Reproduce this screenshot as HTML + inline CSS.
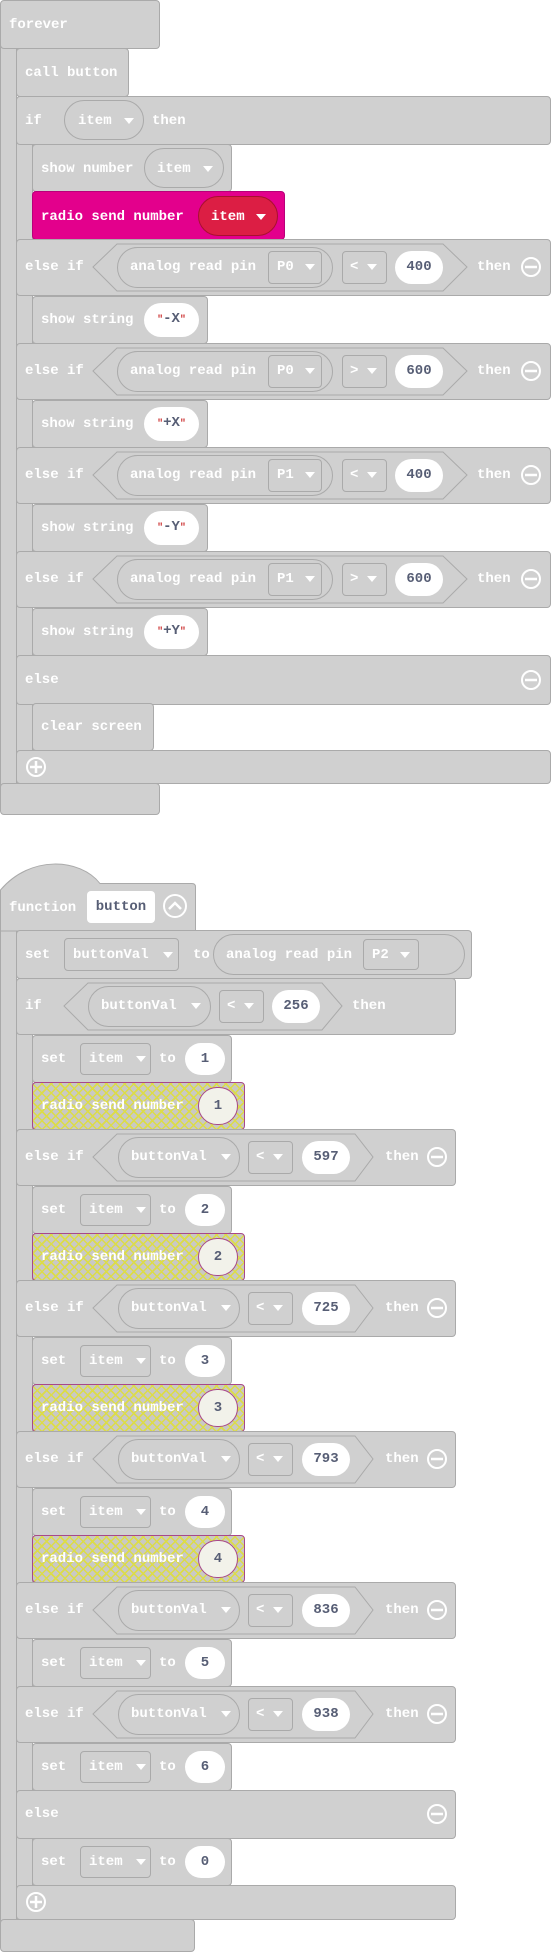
<!DOCTYPE html>
<html><head><meta charset="utf-8"><style>
body{margin:0;width:551px;height:1955px;background:#fff;position:relative;overflow:hidden;font:bold 14px "Liberation Mono",monospace}
.r{position:absolute;left:0;width:551px;height:0}
.r>*{position:absolute}
.b{background:#d0d0d0;border:1px solid #aaa;border-radius:4px;box-sizing:border-box}
.t{color:#fff;line-height:16px;white-space:pre}
.p{border:1px solid #aaa;border-radius:21px;box-sizing:border-box}
.d{border:1px solid #aaa;border-radius:4px;box-sizing:border-box}
.w{background:#fff;border-radius:17px;color:#575e75;text-align:center;line-height:33px;white-space:pre}
.tr{width:0;height:0;border-left:5px solid transparent;border-right:5px solid transparent;border-top:6px solid #fff}
.h{background-color:#c9c9c4;background-image:repeating-linear-gradient(45deg,transparent 0 5px,#dcdc48 5px 6.5px),repeating-linear-gradient(-45deg,transparent 0 5px,#dcdc48 5px 6.5px);border:1px solid #a8488a;border-radius:4px;box-sizing:border-box}
.c{background:#f2f2ea;border:1px solid #a8488a;border-radius:19px;box-sizing:border-box;color:#575e75;text-align:center;line-height:36px}
.q{color:#c33;font-size:10px}
svg{position:absolute}
</style></head><body>

<!-- FOREVER -->
<div class="r" style="top:0">
<div class="b" style="left:0;top:40px;width:17px;height:760px"></div>
<div class="b" style="left:0;top:0;width:160px;height:49px"></div>
<div class="t" style="left:9px;top:17px">forever</div>
<div class="b" style="left:16px;top:140px;width:17px;height:620px"></div>
</div>

<div class="r" style="top:48px">
<div class="b" style="left:16px;top:0;width:113px;height:49px"></div>
<div class="t" style="left:25px;top:17px">call button</div>
</div>

<div class="r" style="top:96px">
<div class="b" style="left:16px;top:0;width:535px;height:49px"></div>
<div class="t" style="left:25px;top:17px">if</div>
<div class="p" style="left:64px;top:4px;width:80px;height:40px"></div>
<div class="t" style="left:78px;top:17px">item</div><div class="tr" style="left:124px;top:22px"></div>
<div class="t" style="left:152px;top:17px">then</div>
</div>

<div class="r" style="top:144px">
<div class="b" style="left:32px;top:0;width:200px;height:48px"></div>
<div class="t" style="left:41px;top:17px">show number</div>
<div class="p" style="left:144px;top:4px;width:80px;height:40px"></div>
<div class="t" style="left:157px;top:17px">item</div><div class="tr" style="left:203px;top:22px"></div>
</div>

<div class="r" style="top:191px">
<div style="left:32px;top:0;width:253px;height:49px;background:#e3008c;border:1px solid #b8007a;border-radius:4px;box-sizing:border-box"></div>
<div class="t" style="left:41px;top:18px">radio send number</div>
<div style="left:198px;top:5px;width:80px;height:40px;background:#dc1e44;border:1px solid #a8102e;border-radius:20px;box-sizing:border-box"></div>
<div class="t" style="left:211px;top:18px">item</div><div class="tr" style="left:256px;top:23px"></div>
</div>

<!-- else if rows forever -->
<div class="r" style="top:239px">
<div class="b" style="left:16px;top:0;width:535px;height:57px"></div>
<svg style="left:0;top:0" width="551" height="57"><polygon points="93,28 117,5 443,5 467,28 443,52 117,52" fill="#d0d0d0" stroke="#aaa"/><circle cx="531" cy="28" r="9" fill="none" stroke="#fff" stroke-width="2"/><line x1="525" y1="28" x2="537" y2="28" stroke="#fff" stroke-width="2.5"/></svg>
<div class="t" style="left:25px;top:20px">else if</div>
<div class="p" style="left:117px;top:8px;width:216px;height:41px"></div>
<div class="t" style="left:130px;top:20px">analog read pin</div>
<div class="d" style="left:268px;top:12px;width:54px;height:33px"></div><div class="t" style="left:277px;top:20px">P0</div><div class="tr" style="left:305px;top:25px"></div>
<div class="d" style="left:342px;top:12px;width:45px;height:33px"></div><div class="t" style="left:350px;top:20px">&lt;</div><div class="tr" style="left:367px;top:25px"></div>
<div class="w" style="left:395px;top:12px;width:48px;height:33px">400</div>
<div class="t" style="left:477px;top:20px">then</div>
</div>
<div class="r" style="top:296px">
<div class="b" style="left:32px;top:0;width:176px;height:48px"></div>
<div class="t" style="left:41px;top:16px">show string</div>
<div class="w" style="left:144px;top:7px;width:55px;height:34px"><span class="q">"</span>-X<span class="q">"</span></div>
</div>

<div class="r" style="top:343px">
<div class="b" style="left:16px;top:0;width:535px;height:57px"></div>
<svg style="left:0;top:0" width="551" height="57"><polygon points="93,28 117,5 443,5 467,28 443,52 117,52" fill="#d0d0d0" stroke="#aaa"/><circle cx="531" cy="28" r="9" fill="none" stroke="#fff" stroke-width="2"/><line x1="525" y1="28" x2="537" y2="28" stroke="#fff" stroke-width="2.5"/></svg>
<div class="t" style="left:25px;top:20px">else if</div>
<div class="p" style="left:117px;top:8px;width:216px;height:41px"></div>
<div class="t" style="left:130px;top:20px">analog read pin</div>
<div class="d" style="left:268px;top:12px;width:54px;height:33px"></div><div class="t" style="left:277px;top:20px">P0</div><div class="tr" style="left:305px;top:25px"></div>
<div class="d" style="left:342px;top:12px;width:45px;height:33px"></div><div class="t" style="left:350px;top:20px">&gt;</div><div class="tr" style="left:367px;top:25px"></div>
<div class="w" style="left:395px;top:12px;width:48px;height:33px">600</div>
<div class="t" style="left:477px;top:20px">then</div>
</div>
<div class="r" style="top:400px">
<div class="b" style="left:32px;top:0;width:176px;height:48px"></div>
<div class="t" style="left:41px;top:16px">show string</div>
<div class="w" style="left:144px;top:7px;width:55px;height:34px"><span class="q">"</span>+X<span class="q">"</span></div>
</div>

<div class="r" style="top:447px">
<div class="b" style="left:16px;top:0;width:535px;height:57px"></div>
<svg style="left:0;top:0" width="551" height="57"><polygon points="93,28 117,5 443,5 467,28 443,52 117,52" fill="#d0d0d0" stroke="#aaa"/><circle cx="531" cy="28" r="9" fill="none" stroke="#fff" stroke-width="2"/><line x1="525" y1="28" x2="537" y2="28" stroke="#fff" stroke-width="2.5"/></svg>
<div class="t" style="left:25px;top:20px">else if</div>
<div class="p" style="left:117px;top:8px;width:216px;height:41px"></div>
<div class="t" style="left:130px;top:20px">analog read pin</div>
<div class="d" style="left:268px;top:12px;width:54px;height:33px"></div><div class="t" style="left:277px;top:20px">P1</div><div class="tr" style="left:305px;top:25px"></div>
<div class="d" style="left:342px;top:12px;width:45px;height:33px"></div><div class="t" style="left:350px;top:20px">&lt;</div><div class="tr" style="left:367px;top:25px"></div>
<div class="w" style="left:395px;top:12px;width:48px;height:33px">400</div>
<div class="t" style="left:477px;top:20px">then</div>
</div>
<div class="r" style="top:504px">
<div class="b" style="left:32px;top:0;width:176px;height:48px"></div>
<div class="t" style="left:41px;top:16px">show string</div>
<div class="w" style="left:144px;top:7px;width:55px;height:34px"><span class="q">"</span>-Y<span class="q">"</span></div>
</div>

<div class="r" style="top:551px">
<div class="b" style="left:16px;top:0;width:535px;height:57px"></div>
<svg style="left:0;top:0" width="551" height="57"><polygon points="93,28 117,5 443,5 467,28 443,52 117,52" fill="#d0d0d0" stroke="#aaa"/><circle cx="531" cy="28" r="9" fill="none" stroke="#fff" stroke-width="2"/><line x1="525" y1="28" x2="537" y2="28" stroke="#fff" stroke-width="2.5"/></svg>
<div class="t" style="left:25px;top:20px">else if</div>
<div class="p" style="left:117px;top:8px;width:216px;height:41px"></div>
<div class="t" style="left:130px;top:20px">analog read pin</div>
<div class="d" style="left:268px;top:12px;width:54px;height:33px"></div><div class="t" style="left:277px;top:20px">P1</div><div class="tr" style="left:305px;top:25px"></div>
<div class="d" style="left:342px;top:12px;width:45px;height:33px"></div><div class="t" style="left:350px;top:20px">&gt;</div><div class="tr" style="left:367px;top:25px"></div>
<div class="w" style="left:395px;top:12px;width:48px;height:33px">600</div>
<div class="t" style="left:477px;top:20px">then</div>
</div>
<div class="r" style="top:608px">
<div class="b" style="left:32px;top:0;width:176px;height:48px"></div>
<div class="t" style="left:41px;top:16px">show string</div>
<div class="w" style="left:144px;top:7px;width:55px;height:34px"><span class="q">"</span>+Y<span class="q">"</span></div>
</div>

<div class="r" style="top:655px">
<div class="b" style="left:16px;top:0;width:535px;height:50px"></div>
<div class="t" style="left:25px;top:17px">else</div>
<svg style="left:0;top:0" width="551" height="50"><circle cx="531" cy="25" r="9" fill="none" stroke="#fff" stroke-width="2"/><line x1="525" y1="25" x2="537" y2="25" stroke="#fff" stroke-width="2.5"/></svg>
</div>
<div class="r" style="top:703px">
<div class="b" style="left:32px;top:0;width:122px;height:48px"></div>
<div class="t" style="left:41px;top:16px">clear screen</div>
</div>
<div class="r" style="top:750px">
<div class="b" style="left:16px;top:0;width:535px;height:34px"></div>
<svg style="left:0;top:0" width="60" height="34"><circle cx="36" cy="17" r="9" fill="none" stroke="#fff" stroke-width="2"/><line x1="30" y1="17" x2="42" y2="17" stroke="#fff" stroke-width="2.5"/><line x1="36" y1="11" x2="36" y2="23" stroke="#fff" stroke-width="2.5"/></svg>
</div>
<div class="r" style="top:783px">
<div class="b" style="left:0;top:0;width:160px;height:32px"></div>
</div>

<!-- FUNCTION -->
<div class="r" style="top:860px">
<div class="b" style="left:0;top:60px;width:17px;height:1010px"></div>
<svg style="left:0;top:0" width="200" height="72"><path d="M0.5,71 L0.5,30 C30,-5 80,-2 100,23.5 L192,23.5 Q195.5,23.5 195.5,27 L195.5,71 Z" fill="#d0d0d0" stroke="#aaa"/><circle cx="175" cy="46" r="11" fill="none" stroke="#fff" stroke-width="2"/><polyline points="169,49 175,43 181,49" fill="none" stroke="#fff" stroke-width="2.5"/></svg>
<div class="t" style="left:9px;top:40px">function</div>
<div style="left:87px;top:31px;width:68px;height:32px;background:#fff;border-radius:4px;color:#575e75;line-height:32px;text-align:center">button</div>
</div>
<div class="r" style="top:978px">
<div class="b" style="left:16px;top:40px;width:17px;height:880px"></div>
</div>

<div class="r" style="top:930px">
<div class="b" style="left:16px;top:0;width:456px;height:49px"></div>
<div class="t" style="left:25px;top:17px">set</div>
<div class="d" style="left:64px;top:8px;width:115px;height:33px"></div><div class="t" style="left:73px;top:17px">buttonVal</div><div class="tr" style="left:163px;top:22px"></div>
<div class="t" style="left:193px;top:17px">to</div>
<div class="p" style="left:213px;top:4px;width:252px;height:41px"></div>
<div class="t" style="left:226px;top:17px">analog read pin</div>
<div class="d" style="left:363px;top:9px;width:56px;height:31px"></div><div class="t" style="left:372px;top:17px">P2</div><div class="tr" style="left:400px;top:22px"></div>
</div>

<div class="r" style="top:978px">
<div class="b" style="left:16px;top:0;width:440px;height:57px"></div>
<svg style="left:0;top:0" width="460" height="57"><polygon points="64,28 88,5 322,5 342,28 322,52 88,52" fill="#d0d0d0" stroke="#aaa"/></svg>
<div class="t" style="left:25px;top:20px">if</div>
<div class="p" style="left:88px;top:8px;width:123px;height:41px"></div><div class="t" style="left:101px;top:20px">buttonVal</div><div class="tr" style="left:191px;top:25px"></div>
<div class="d" style="left:219px;top:12px;width:45px;height:33px"></div><div class="t" style="left:227px;top:20px">&lt;</div><div class="tr" style="left:244px;top:25px"></div>
<div class="w" style="left:272px;top:12px;width:48px;height:33px">256</div>
<div class="t" style="left:352px;top:20px">then</div>
</div>

<!-- set/radio/elseif function rows -->
<div class="r" style="top:1035px">
<div class="b" style="left:32px;top:0;width:200px;height:48px"></div>
<div class="t" style="left:41px;top:16px">set</div>
<div class="d" style="left:80px;top:8px;width:71px;height:32px"></div><div class="t" style="left:89px;top:16px">item</div><div class="tr" style="left:136px;top:21px"></div>
<div class="t" style="left:159px;top:16px">to</div>
<div class="w" style="left:185px;top:8px;width:40px;height:32px;line-height:32px">1</div>
</div>
<div class="r" style="top:1082px">
<div class="h" style="left:32px;top:0;width:213px;height:48px"></div>
<div class="t" style="left:41px;top:16px">radio send number</div>
<div class="c" style="left:198px;top:5px;width:40px;height:38px">1</div>
</div>

<div class="r" style="top:1129px">
<div class="b" style="left:16px;top:0;width:440px;height:57px"></div>
<svg style="left:0;top:0" width="460" height="57"><polygon points="93,28 117,5 355,5 373,28 355,52 117,52" fill="#d0d0d0" stroke="#aaa"/><circle cx="437" cy="28" r="9" fill="none" stroke="#fff" stroke-width="2"/><line x1="431" y1="28" x2="443" y2="28" stroke="#fff" stroke-width="2.5"/></svg>
<div class="t" style="left:25px;top:20px">else if</div>
<div class="p" style="left:118px;top:8px;width:122px;height:41px"></div><div class="t" style="left:131px;top:20px">buttonVal</div><div class="tr" style="left:221px;top:25px"></div>
<div class="d" style="left:248px;top:12px;width:45px;height:33px"></div><div class="t" style="left:256px;top:20px">&lt;</div><div class="tr" style="left:273px;top:25px"></div>
<div class="w" style="left:302px;top:12px;width:48px;height:33px">597</div>
<div class="t" style="left:385px;top:20px">then</div>
</div>
<div class="r" style="top:1186px">
<div class="b" style="left:32px;top:0;width:200px;height:48px"></div>
<div class="t" style="left:41px;top:16px">set</div>
<div class="d" style="left:80px;top:8px;width:71px;height:32px"></div><div class="t" style="left:89px;top:16px">item</div><div class="tr" style="left:136px;top:21px"></div>
<div class="t" style="left:159px;top:16px">to</div>
<div class="w" style="left:185px;top:8px;width:40px;height:32px;line-height:32px">2</div>
</div>
<div class="r" style="top:1233px">
<div class="h" style="left:32px;top:0;width:213px;height:48px"></div>
<div class="t" style="left:41px;top:16px">radio send number</div>
<div class="c" style="left:198px;top:5px;width:40px;height:38px">2</div>
</div>

<div class="r" style="top:1280px">
<div class="b" style="left:16px;top:0;width:440px;height:57px"></div>
<svg style="left:0;top:0" width="460" height="57"><polygon points="93,28 117,5 355,5 373,28 355,52 117,52" fill="#d0d0d0" stroke="#aaa"/><circle cx="437" cy="28" r="9" fill="none" stroke="#fff" stroke-width="2"/><line x1="431" y1="28" x2="443" y2="28" stroke="#fff" stroke-width="2.5"/></svg>
<div class="t" style="left:25px;top:20px">else if</div>
<div class="p" style="left:118px;top:8px;width:122px;height:41px"></div><div class="t" style="left:131px;top:20px">buttonVal</div><div class="tr" style="left:221px;top:25px"></div>
<div class="d" style="left:248px;top:12px;width:45px;height:33px"></div><div class="t" style="left:256px;top:20px">&lt;</div><div class="tr" style="left:273px;top:25px"></div>
<div class="w" style="left:302px;top:12px;width:48px;height:33px">725</div>
<div class="t" style="left:385px;top:20px">then</div>
</div>
<div class="r" style="top:1337px">
<div class="b" style="left:32px;top:0;width:200px;height:48px"></div>
<div class="t" style="left:41px;top:16px">set</div>
<div class="d" style="left:80px;top:8px;width:71px;height:32px"></div><div class="t" style="left:89px;top:16px">item</div><div class="tr" style="left:136px;top:21px"></div>
<div class="t" style="left:159px;top:16px">to</div>
<div class="w" style="left:185px;top:8px;width:40px;height:32px;line-height:32px">3</div>
</div>
<div class="r" style="top:1384px">
<div class="h" style="left:32px;top:0;width:213px;height:48px"></div>
<div class="t" style="left:41px;top:16px">radio send number</div>
<div class="c" style="left:198px;top:5px;width:40px;height:38px">3</div>
</div>

<div class="r" style="top:1431px">
<div class="b" style="left:16px;top:0;width:440px;height:57px"></div>
<svg style="left:0;top:0" width="460" height="57"><polygon points="93,28 117,5 355,5 373,28 355,52 117,52" fill="#d0d0d0" stroke="#aaa"/><circle cx="437" cy="28" r="9" fill="none" stroke="#fff" stroke-width="2"/><line x1="431" y1="28" x2="443" y2="28" stroke="#fff" stroke-width="2.5"/></svg>
<div class="t" style="left:25px;top:20px">else if</div>
<div class="p" style="left:118px;top:8px;width:122px;height:41px"></div><div class="t" style="left:131px;top:20px">buttonVal</div><div class="tr" style="left:221px;top:25px"></div>
<div class="d" style="left:248px;top:12px;width:45px;height:33px"></div><div class="t" style="left:256px;top:20px">&lt;</div><div class="tr" style="left:273px;top:25px"></div>
<div class="w" style="left:302px;top:12px;width:48px;height:33px">793</div>
<div class="t" style="left:385px;top:20px">then</div>
</div>
<div class="r" style="top:1488px">
<div class="b" style="left:32px;top:0;width:200px;height:48px"></div>
<div class="t" style="left:41px;top:16px">set</div>
<div class="d" style="left:80px;top:8px;width:71px;height:32px"></div><div class="t" style="left:89px;top:16px">item</div><div class="tr" style="left:136px;top:21px"></div>
<div class="t" style="left:159px;top:16px">to</div>
<div class="w" style="left:185px;top:8px;width:40px;height:32px;line-height:32px">4</div>
</div>
<div class="r" style="top:1535px">
<div class="h" style="left:32px;top:0;width:213px;height:48px"></div>
<div class="t" style="left:41px;top:16px">radio send number</div>
<div class="c" style="left:198px;top:5px;width:40px;height:38px">4</div>
</div>

<div class="r" style="top:1582px">
<div class="b" style="left:16px;top:0;width:440px;height:57px"></div>
<svg style="left:0;top:0" width="460" height="57"><polygon points="93,28 117,5 355,5 373,28 355,52 117,52" fill="#d0d0d0" stroke="#aaa"/><circle cx="437" cy="28" r="9" fill="none" stroke="#fff" stroke-width="2"/><line x1="431" y1="28" x2="443" y2="28" stroke="#fff" stroke-width="2.5"/></svg>
<div class="t" style="left:25px;top:20px">else if</div>
<div class="p" style="left:118px;top:8px;width:122px;height:41px"></div><div class="t" style="left:131px;top:20px">buttonVal</div><div class="tr" style="left:221px;top:25px"></div>
<div class="d" style="left:248px;top:12px;width:45px;height:33px"></div><div class="t" style="left:256px;top:20px">&lt;</div><div class="tr" style="left:273px;top:25px"></div>
<div class="w" style="left:302px;top:12px;width:48px;height:33px">836</div>
<div class="t" style="left:385px;top:20px">then</div>
</div>
<div class="r" style="top:1639px">
<div class="b" style="left:32px;top:0;width:200px;height:48px"></div>
<div class="t" style="left:41px;top:16px">set</div>
<div class="d" style="left:80px;top:8px;width:71px;height:32px"></div><div class="t" style="left:89px;top:16px">item</div><div class="tr" style="left:136px;top:21px"></div>
<div class="t" style="left:159px;top:16px">to</div>
<div class="w" style="left:185px;top:8px;width:40px;height:32px;line-height:32px">5</div>
</div>

<div class="r" style="top:1686px">
<div class="b" style="left:16px;top:0;width:440px;height:57px"></div>
<svg style="left:0;top:0" width="460" height="57"><polygon points="93,28 117,5 355,5 373,28 355,52 117,52" fill="#d0d0d0" stroke="#aaa"/><circle cx="437" cy="28" r="9" fill="none" stroke="#fff" stroke-width="2"/><line x1="431" y1="28" x2="443" y2="28" stroke="#fff" stroke-width="2.5"/></svg>
<div class="t" style="left:25px;top:20px">else if</div>
<div class="p" style="left:118px;top:8px;width:122px;height:41px"></div><div class="t" style="left:131px;top:20px">buttonVal</div><div class="tr" style="left:221px;top:25px"></div>
<div class="d" style="left:248px;top:12px;width:45px;height:33px"></div><div class="t" style="left:256px;top:20px">&lt;</div><div class="tr" style="left:273px;top:25px"></div>
<div class="w" style="left:302px;top:12px;width:48px;height:33px">938</div>
<div class="t" style="left:385px;top:20px">then</div>
</div>
<div class="r" style="top:1743px">
<div class="b" style="left:32px;top:0;width:200px;height:48px"></div>
<div class="t" style="left:41px;top:16px">set</div>
<div class="d" style="left:80px;top:8px;width:71px;height:32px"></div><div class="t" style="left:89px;top:16px">item</div><div class="tr" style="left:136px;top:21px"></div>
<div class="t" style="left:159px;top:16px">to</div>
<div class="w" style="left:185px;top:8px;width:40px;height:32px;line-height:32px">6</div>
</div>

<div class="r" style="top:1790px">
<div class="b" style="left:16px;top:0;width:440px;height:49px"></div>
<div class="t" style="left:25px;top:16px">else</div>
<svg style="left:0;top:0" width="460" height="49"><circle cx="437" cy="24" r="9" fill="none" stroke="#fff" stroke-width="2"/><line x1="431" y1="24" x2="443" y2="24" stroke="#fff" stroke-width="2.5"/></svg>
</div>
<div class="r" style="top:1838px">
<div class="b" style="left:32px;top:0;width:200px;height:48px"></div>
<div class="t" style="left:41px;top:16px">set</div>
<div class="d" style="left:80px;top:8px;width:71px;height:32px"></div><div class="t" style="left:89px;top:16px">item</div><div class="tr" style="left:136px;top:21px"></div>
<div class="t" style="left:159px;top:16px">to</div>
<div class="w" style="left:185px;top:8px;width:40px;height:32px;line-height:32px">0</div>
</div>
<div class="r" style="top:1885px">
<div class="b" style="left:16px;top:0;width:440px;height:35px"></div>
<svg style="left:0;top:0" width="60" height="35"><circle cx="36" cy="17" r="9" fill="none" stroke="#fff" stroke-width="2"/><line x1="30" y1="17" x2="42" y2="17" stroke="#fff" stroke-width="2.5"/><line x1="36" y1="11" x2="36" y2="23" stroke="#fff" stroke-width="2.5"/></svg>
</div>
<div class="r" style="top:1919px">
<div class="b" style="left:0;top:0;width:195px;height:33px"></div>
</div>

</body></html>
